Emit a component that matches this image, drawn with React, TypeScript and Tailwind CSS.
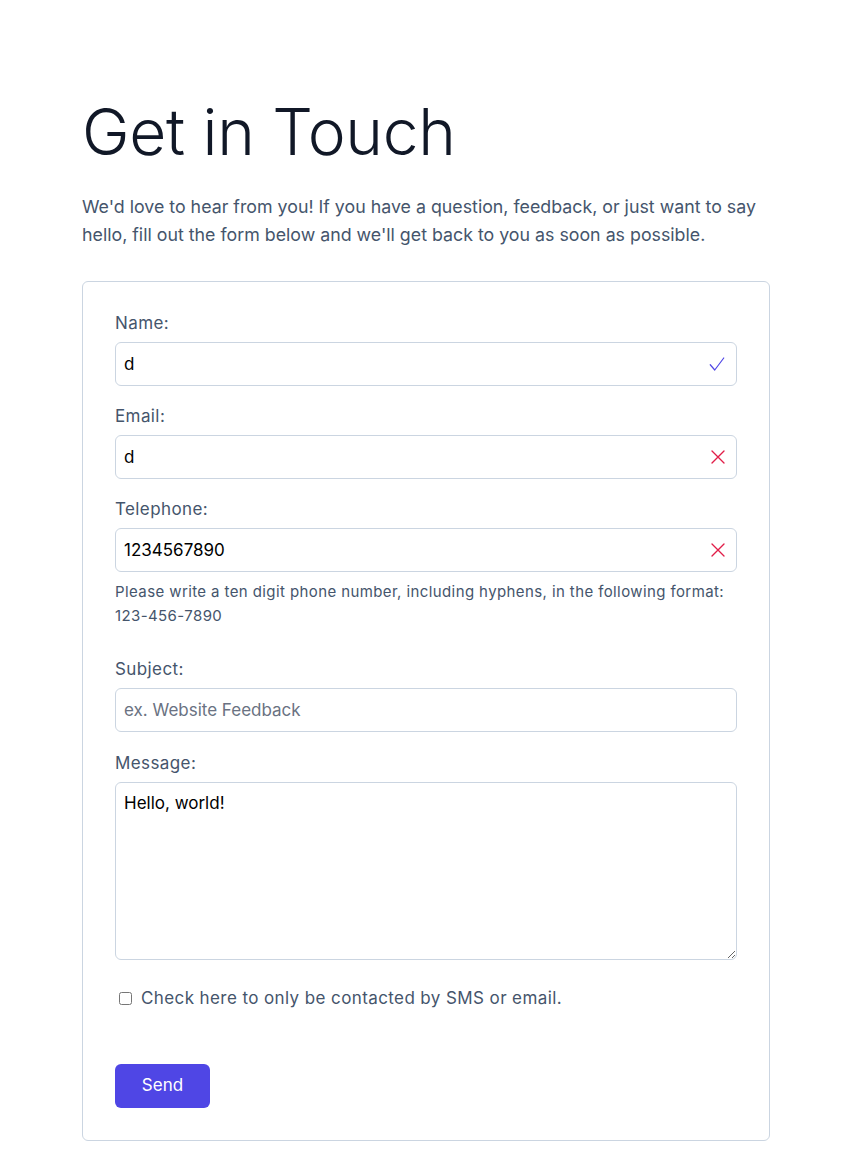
import { useState } from "react"

function Check() {
  return (
    <svg width="18" height="18" viewBox="0 0 24 24" fill="none" stroke="#4f46e5" strokeWidth="1.6" strokeLinecap="round" strokeLinejoin="round">
      <path d="M3 13l6 7L21 4" />
    </svg>
  )
}

function Cross() {
  return (
    <svg width="16" height="16" viewBox="0 0 24 24" fill="none" stroke="#e11d48" strokeWidth="2" strokeLinecap="round">
      <path d="M3 3l18 18M21 3L3 21" />
    </svg>
  )
}

function Field({
  label,
  value,
  placeholder,
  status,
}: {
  label: string
  value?: string
  placeholder?: string
  status?: "ok" | "bad"
}) {
  const [v, setV] = useState(value ?? "")
  return (
    <div>
      <label className="block text-[17px] leading-6 tracking-[0.4px] text-slate-600">{label}</label>
      <div className="relative mt-[7px]">
        <input
          value={v}
          onChange={(e) => setV(e.target.value)}
          placeholder={placeholder}
          className="h-[44px] w-full rounded-md border border-[#cbd5e1] px-[8px] text-[17px] text-black placeholder:text-gray-500 outline-none"
        />
        {status && (
          <span className="absolute right-[11px] top-1/2 -translate-y-1/2">
            {status === "ok" ? <Check /> : <Cross />}
          </span>
        )}
      </div>
    </div>
  )
}

export default function App() {
  return (
    <div className="min-h-screen bg-white font-['Inter',sans-serif] text-slate-900">
      <div className="mx-[82px] pt-[96px] pb-8">
        <h1 className="text-[64px] font-light leading-[72px] tracking-[-0.3px] text-[#111827]">Get in Touch</h1>
        <p className="mt-[25px] text-[17.8px] leading-[28px] text-slate-600">
          We'd love to hear from you! If you have a question, feedback, or just want to say hello, fill out the form below and we'll get back to you as soon as possible.
        </p>

        <form className="mt-[32px] rounded-md border border-[#cbd5e1] px-8 pt-[29px] pb-8" onSubmit={(e) => e.preventDefault()}>
          <div className="flex flex-col gap-[18px]">
            <Field label="Name:" value="d" status="ok" />
            <Field label="Email:" value="d" status="bad" />
            <div>
              <Field label="Telephone:" value="1234567890" status="bad" />
              <p className="mt-[8px] text-[15px] leading-6 tracking-[0.4px] text-slate-600">
                Please write a ten digit phone number, including hyphens, in the following format: 123-456-7890
              </p>
            </div>
            <div className="mt-[11px]">
              <Field label="Subject:" placeholder="ex. Website Feedback" />
            </div>
            <div className="mt-[1px]">
              <label className="block text-[17px] leading-6 tracking-[0.4px] text-slate-600">Message:</label>
              <textarea
                defaultValue="Hello, world!"
                className="mt-[7px] block h-[178px] w-full rounded-md border border-[#cbd5e1] px-[8px] py-[8px] text-[17px] text-black outline-none"
              />
            </div>
          </div>

          <label className="mt-[26px] flex items-center gap-[9px] pl-[4px] text-[17px] leading-6 tracking-[0.4px] text-slate-600">
            <input type="checkbox" className="h-[13px] w-[13px]" />
            Check here to only be contacted by SMS or email.
          </label>

          <button
            type="submit"
            className="mt-[54px] h-[44px] w-[95px] rounded-md bg-[#4f46e5] text-[17px] text-white"
          >
            Send
          </button>
        </form>
      </div>
    </div>
  )
}
